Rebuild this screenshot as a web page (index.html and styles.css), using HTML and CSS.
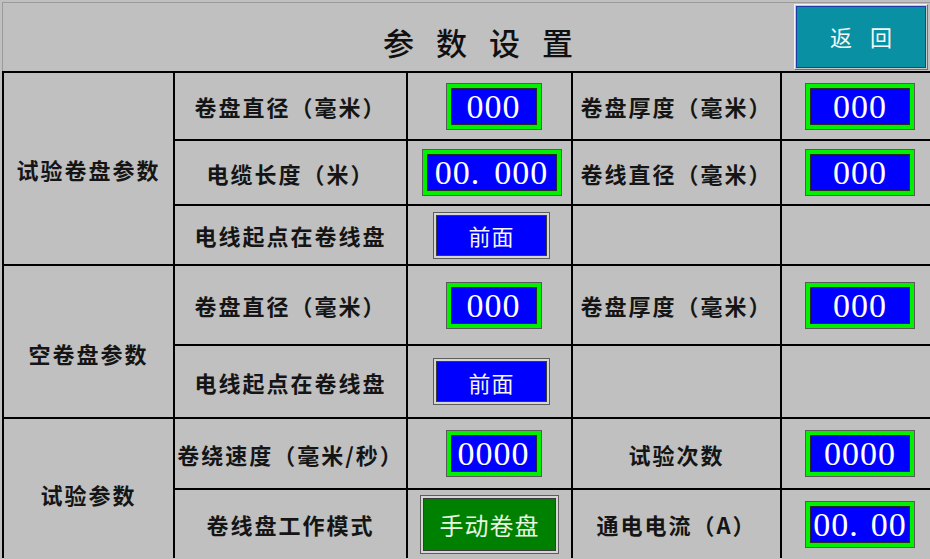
FILE: index.html
```html
<!DOCTYPE html>
<html lang="zh-CN">
<head>
<meta charset="utf-8">
<title>参数设置</title>
<link rel="stylesheet" href="styles.css">
</head>
<body>
<div class="frame">
  <header class="head">
    <h1 class="title">参数设置</h1>
    <div class="back"><span class="back-in">返回</span></div>
  </header>
  <div class="grid">
    <div class="sec s1">试验卷盘参数</div>
    <div class="cell lab">卷盘直径（毫米）</div>
    <div class="cell"><div class="val w96"><span>000</span></div></div>
    <div class="cell lab">卷盘厚度（毫米）</div>
    <div class="cell"><div class="val w110"><span>000</span></div></div>

    <div class="cell lab">电缆长度（米）</div>
    <div class="cell"><div class="val w140"><span>00.<i class="sp"></i>000</span></div></div>
    <div class="cell lab">卷线直径（毫米）</div>
    <div class="cell"><div class="val w110"><span>000</span></div></div>

    <div class="cell lab">电线起点在卷线盘</div>
    <div class="cell"><div class="btn blue"><span>前面</span></div></div>
    <div class="cell"></div>
    <div class="cell"></div>

    <div class="sec s2">空卷盘参数</div>
    <div class="cell lab">卷盘直径（毫米）</div>
    <div class="cell"><div class="val w96"><span>000</span></div></div>
    <div class="cell lab">卷盘厚度（毫米）</div>
    <div class="cell"><div class="val w110"><span>000</span></div></div>

    <div class="cell lab">电线起点在卷线盘</div>
    <div class="cell"><div class="btn blue"><span>前面</span></div></div>
    <div class="cell"></div>
    <div class="cell"></div>

    <div class="sec s3">试验参数</div>
    <div class="cell lab">卷绕速度（毫米/秒）</div>
    <div class="cell"><div class="val w96"><span>0000</span></div></div>
    <div class="cell lab">试验次数</div>
    <div class="cell"><div class="val w110"><span>0000</span></div></div>

    <div class="cell lab">卷线盘工作模式</div>
    <div class="cell"><div class="btn green"><span>手动卷盘</span></div></div>
    <div class="cell lab">通电电流（A）</div>
    <div class="cell"><div class="val w110"><span>00.<i class="sp2"></i>00</span></div></div>
  </div>
</div>
</body>
</html>
```

FILE: styles.css
```css
html, body {
  margin: 0;
  padding: 0;
  background: #c0c0c0;
  overflow: hidden;
}
body {
  width: 930px;
  height: 559px;
  font-family: "Noto Sans CJK SC", "Noto Sans", sans-serif;
  color: #151515;
}
.frame {
  margin: 2px 0 0 2px;
  width: 930px;
}
.head {
  height: 68px;
  border-top: 1px solid #9a9a9a;
  border-left: 1px solid #9a9a9a;
  display: flex;
  align-items: flex-start;
  justify-content: space-between;
}
.title {
  margin: 0;
  padding: 23px 0 0 380px;
  font-size: 31px;
  line-height: 32px;
  font-weight: 500;
  letter-spacing: 22px;
  color: #101010;
}
.back {
  margin: 1px 4px 0 0;
  width: 134px;
  height: 66px;
  box-sizing: border-box;
  border-top: 1px solid #f4f4f4;
  border-left: 1px solid #f4f4f4;
  border-right: 1px solid #707070;
  border-bottom: 1px solid #707070;
  padding: 1px;
  background: #c8c8c8;
  display: flex;
}
.back-in {
  flex: 1;
  border: 1px solid #1d3aa8;
  background: #0991a3;
  color: #f4f8f8;
  font-size: 22px;
  letter-spacing: 18px;
  padding-left: 18px;
  display: flex;
  align-items: center;
  justify-content: center;
  padding-bottom: 2px;
}
.grid {
  display: grid;
  grid-template-columns: 169px 231px 163px 207px 152px;
  grid-template-rows: 66px 63px 58px 78px 71px 69px 68px;
  gap: 2px;
  padding: 2px 0 0 2px;
  background: #000;
}
.grid > div {
  background: #c0c0c0;
}
.cell {
  display: flex;
  align-items: center;
  justify-content: center;
}
.lab, .sec {
  font-size: 22px;
  font-weight: 700;
  letter-spacing: 2px;
  white-space: nowrap;
}
.sec {
  display: flex;
  align-items: center;
  justify-content: center;
}
.s1 { grid-row: span 3; }
.s2 { grid-row: span 2; padding-top: 22px; }
.s3 { grid-row: span 2; padding-top: 10px; }

.val {
  box-sizing: border-box;
  height: 47px;
  border: 1px solid #5a5a5a;
  background: #00f000;
  padding: 4px;
  display: flex;
}
.val span {
  flex: 1;
  border: 1px solid #2a2a2a;
  background: #0000ff;
  color: #fff;
  font-family: "Liberation Serif", "DejaVu Serif", serif;
  font-size: 34px;
  line-height: 1;
  letter-spacing: 1px;
  display: flex;
  align-items: center;
  justify-content: center;
  padding-top: 1px;
}
.sp { display: inline-block; width: 14px; }
.sp2 { display: inline-block; width: 12px; }
.w96 { width: 96px; margin-left: 8px; }
.w110 { width: 110px; margin-left: 4px; }
.w140 { width: 140px; margin-left: 4px; }

.btn {
  box-sizing: border-box;
  border: 1px solid #5c5c5c;
  padding: 2px;
  background: #d6d6d6;
  display: flex;
}
.btn span {
  flex: 1;
  border: 1px solid #3a3a3a;
  display: flex;
  align-items: center;
  justify-content: center;
  color: #f6f6f6;
  font-size: 22px;
  letter-spacing: 1px;
}
.btn.blue {
  width: 117px;
  height: 47px;
  margin-left: 4px;
}
.btn.blue span { background: #0000ff; }
.btn.green {
  width: 139px;
  height: 59px;
}
.btn.green span {
  background: #008000;
  font-size: 24px;
  color: #e8f6e0;
}
```
